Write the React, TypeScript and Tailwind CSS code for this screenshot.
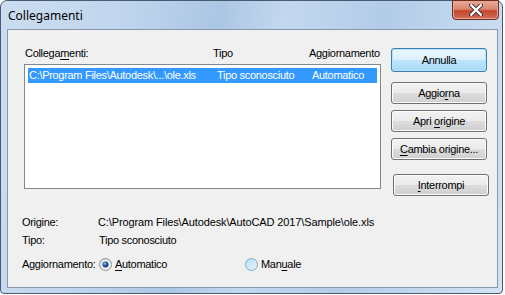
import React from "react";

const font = { fontFamily: '"Liberation Sans", Arial, sans-serif' };

function U({ children }: { children: React.ReactNode }) {
  return <span className="underline underline-offset-[2px] decoration-1">{children}</span>;
}

function Btn({
  children,
  primary,
  className = "",
}: {
  children: React.ReactNode;
  primary?: boolean;
  className?: string;
}) {
  return (
    <div
      className={
        "flex h-[22px] w-[96px] items-center justify-center rounded-[3px] border text-[11px] text-black " +
        (primary
          ? "border-[#3c7fb1] bg-[linear-gradient(#eaf6fd_0%,#d9f0fc_50%,#bee6fd_50%,#a7d9f5_100%)] shadow-[inset_0_0_0_1px_#b8e2f8]"
          : "border-[#707070] bg-[linear-gradient(#f2f2f2_0%,#ebebeb_50%,#dddddd_50%,#cfcfcf_100%)] shadow-[inset_0_0_0_1px_#fcfcfc]") +
        " " +
        className
      }
    >
      <span className="tracking-[-0.3px]">{children}</span>
    </div>
  );
}

function Radio({ checked }: { checked?: boolean }) {
  return (
    <svg width="13" height="13" viewBox="0 0 13 13" className="shrink-0">
      <defs>
        <linearGradient id={checked ? "rg1" : "rg2"} x1="0" y1="0" x2="1" y2="1">
          <stop offset="0" stopColor={checked ? "#dcdcdc" : "#b5dcf5"} />
          <stop offset="1" stopColor={checked ? "#f8f8f8" : "#eaf6fd"} />
        </linearGradient>
        <radialGradient id="dot" cx="0.4" cy="0.35" r="0.7">
          <stop offset="0" stopColor="#8cc1ee" />
          <stop offset="0.5" stopColor="#1c5ba6" />
          <stop offset="1" stopColor="#0b2f63" />
        </radialGradient>
      </defs>
      <circle cx="6.5" cy="6.5" r="6" fill={`url(#${checked ? "rg1" : "rg2"})`} stroke={checked ? "#8e8f8f" : "#7fa9c9"} />
      {checked && <circle cx="6.5" cy="6.5" r="3" fill="url(#dot)" />}
    </svg>
  );
}

export default function App() {
  return (
    <div className="h-[295px] w-[505px] bg-white" style={font}>
      <div className="relative flex h-[294px] w-[503px] flex-col rounded-t-[7px] rounded-b-[4px] border border-[#4a5a6e] bg-[linear-gradient(100deg,#cbdcf0_0%,#c0d6ee_22%,#abc6e4_40%,#c3d8ef_52%,#b2cce8_70%,#c6daf0_88%,#d3e3f3_100%)] pl-[6px] pr-[4px] pb-[5px]">
        {/* title */}
        <div className="flex h-[28px] items-center pl-[1px] pt-[1px] text-[12px] text-black" style={{ fontFamily: '"Noto Sans", "Open Sans", sans-serif' }}>
          Collegamenti
        </div>
        <div className="absolute right-[3px] top-[-1px] flex h-[20px] w-[47px] items-center justify-center rounded-b-[4px] border border-[#6e2a20] bg-[linear-gradient(#e9a899_0%,#d98771_45%,#c5452c_55%,#d0705c_100%)] shadow-[inset_0_0_0_1px_#eba595]">
          <svg width="14" height="12" viewBox="0 0 14 12">
            <path d="M2 1 L12 11 M12 1 L2 11" stroke="#3a2a2a" strokeWidth="4.2" strokeLinecap="round" />
            <path d="M2.3 1.3 L11.7 10.7 M11.7 1.3 L2.3 10.7" stroke="#ffffff" strokeWidth="2.4" strokeLinecap="square" />
          </svg>
        </div>

        {/* client */}
        <div className="flex flex-1 flex-col border border-[#8497ad] bg-[#f0f0f0] text-[11px] text-black">
          <div className="flex">
            <div className="flex flex-col pl-[16px] pt-[17px]">
              <div className="flex h-[12px] items-center tracking-[-0.3px]">
                <span className="w-[189px] pl-[1px]">
                  Collega<U>m</U>enti:
                </span>
                <span className="w-[96px]">Tipo</span>
                <span>Aggiornamento</span>
              </div>
              <div className="mt-[5px] h-[125px] w-[357px] border border-[#828790] bg-white p-[3px]">
                <div className="flex h-[15px] items-center bg-[#3399ff] pl-[1px] tracking-[-0.3px] text-white">
                  <span className="w-[188px]">C:\Program Files\Autodesk\...\ole.xls</span>
                  <span className="w-[95px]">Tipo sconosciuto</span>
                  <span>Automatico</span>
                </div>
              </div>
            </div>
            <div className="ml-[10px] flex flex-col pt-[18px]">
              <Btn primary className="h-[24px]">Annulla</Btn>
              <Btn className="mt-[10px]">
                Aggio<U>r</U>na
              </Btn>
              <Btn className="mt-[6px]">
                Apri <U>o</U>rigine
              </Btn>
              <Btn className="mt-[6px]">
                <U>C</U>ambia origine...
              </Btn>
              <Btn className="ml-[2px] mt-[14px]">
                <U>I</U>nterrompi
              </Btn>
            </div>
          </div>

          <div className="mt-[20px] flex flex-col gap-[6px] pl-[14px] tracking-[-0.3px]">
            <div className="flex h-[12px] items-center">
              <span className="w-[76px]">Origine:</span>
              <span className="tracking-[-0.12px]">C:\Program Files\Autodesk\AutoCAD 2017\Sample\ole.xls</span>
            </div>
            <div className="flex h-[12px] items-center">
              <span className="w-[77px]">Tipo:</span>
              <span>Tipo sconosciuto</span>
            </div>
            <div className="mt-[5px] flex h-[14px] items-center">
              <span className="w-[77px]">Aggiornamento:</span>
              <Radio checked />
              <span className="ml-[3px] w-[130px]">
                <U>A</U>utomatico
              </span>
              <Radio />
              <span className="ml-[3px]">
                Man<U>u</U>ale
              </span>
            </div>
          </div>
        </div>
      </div>
    </div>
  );
}
